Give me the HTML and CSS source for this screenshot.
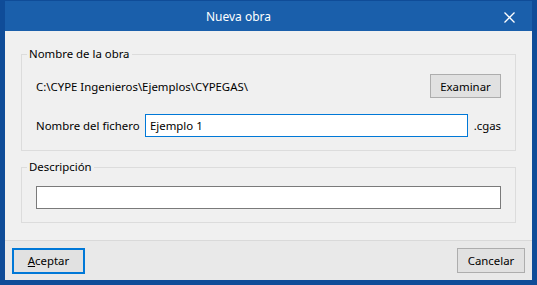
FILE: index.html
```html
<!DOCTYPE html>
<html>
  <head>
    <title>Nueva obra</title>
    <meta name="viewport" content="width=device-width, initial-scale=1.0" />
    <link rel="stylesheet" href="styles.css">
  </head>
  <body>
    <div class="window">
      <div class="titlebar">
        <span class="title">Nueva obra</span>
        <span class="close">
          <svg width="11" height="11" viewBox="0 0 11 11">
            <path d="M0.5 0.5 L10.5 10.5 M10.5 0.5 L0.5 10.5" stroke="#fff" stroke-width="1.3" fill="none" />
          </svg>
        </span>
      </div>

      <div class="main">
        <fieldset class="group">
          <legend>Nombre de la obra</legend>
          <div class="row">
            <span class="path">C:\CYPE Ingenieros\Ejemplos\CYPEGAS\</span>
            <button class="btn">Examinar</button>
          </div>
          <div class="row row-file">
            <label class="label" for="fichero">Nombre del fichero</label>
            <input id="fichero" class="field field-focus" type="text" value="Ejemplo 1">
            <span class="ext">.cgas</span>
          </div>
        </fieldset>

        <fieldset class="group group-desc">
          <legend>Descripción</legend>
          <input class="field" type="text" value="">
        </fieldset>
      </div>

      <div class="footer">
        <button class="btn btn-default"><u>A</u>ceptar</button>
        <button class="btn btn-cancel">Cancelar</button>
      </div>
    </div>
  </body>
</html>
```

FILE: styles.css
```css
body {
  margin: 0;
  font-family: "Noto Sans", sans-serif;
  font-size: 11.4px;
  line-height: 16px;
  color: #000;
}

.window {
  width: 537px;
  height: 285px;
  box-sizing: border-box;
  border: 5px solid #0f4c98;
  border-top-width: 1px;
  background: #f0f0f0;
  display: flex;
  flex-direction: column;
}

.titlebar {
  height: 30px;
  background: #1a5fab;
  color: #fff;
  display: flex;
  align-items: center;
  font-size: 12px;
}
.title {
  flex: 1;
  text-align: center;
  padding-right: 14px;
  padding-top: 1px;
}
.close {
  width: 46px;
  height: 30px;
  display: flex;
  align-items: center;
  justify-content: center;
  padding-top: 2px;
  box-sizing: border-box;
}
.close svg {
  display: block;
}

.main {
  padding: 15px 16px 0;
}

.group {
  margin: 0;
  border: 1px solid #dcdcdc;
  padding: 12px 14px 13px;
}
.group legend {
  padding: 0 2px;
  margin-left: -9px;
  white-space: nowrap;
}
.group-desc {
  margin-top: 8px;
  padding-top: 11px;
}

.row {
  display: flex;
  align-items: center;
  justify-content: space-between;
  white-space: nowrap;
}
.row-file {
  margin-top: 16px;
}
.path {
  padding-top: 1px;
}
.label {
  width: 109px;
  flex: none;
}
.ext {
  margin-left: 6px;
}

.field {
  display: block;
  box-sizing: border-box;
  height: 23px;
  width: 100%;
  margin: 0;
  border: 1px solid #7a7a7a;
  background: #fff;
  font-family: inherit;
  font-size: 11.4px;
  padding: 0 4px;
  color: #000;
  outline: none;
}
.field-focus {
  flex: 1;
  width: auto;
  border-color: #0078d7;
}

.btn {
  box-sizing: border-box;
  height: 24px;
  width: 71px;
  margin: 0;
  padding: 0;
  border: 1px solid #adadad;
  background: #e1e1e1;
  font-family: inherit;
  font-size: 11.4px;
  color: #000;
}

.footer {
  margin-top: auto;
  height: 40px;
  box-sizing: border-box;
  border-top: 1px solid #d9d9d9;
  background: #e9e9e9;
  padding: 0 7px;
  display: flex;
  align-items: center;
  justify-content: space-between;
}
.btn-default {
  width: 73px;
  height: 26px;
  border: 2px solid #0078d7;
}
.btn-default u {
  text-decoration-thickness: 1px;
}
.btn-cancel {
  width: 68px;
  height: 25px;
}
```
